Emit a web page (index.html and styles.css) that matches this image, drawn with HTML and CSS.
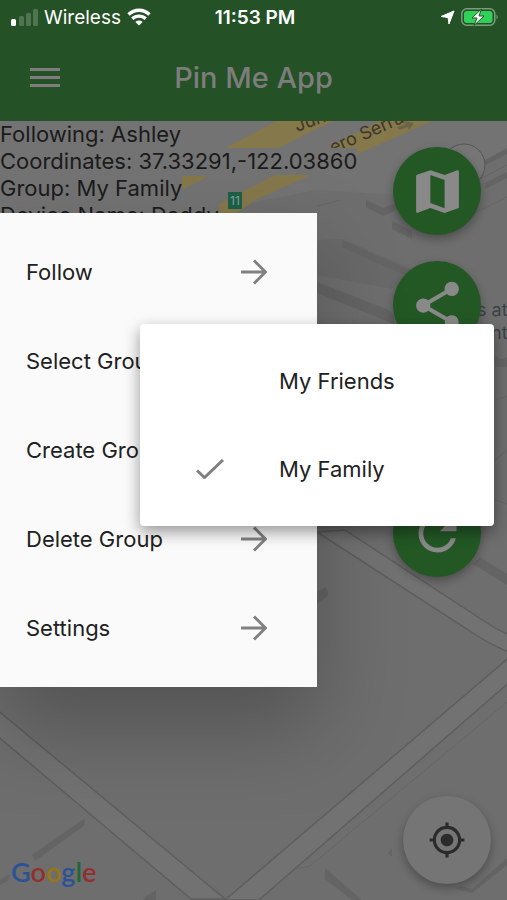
FILE: index.html
```
<!DOCTYPE html>
<html lang="en">
<head>
    <meta charset="UTF-8">
    <meta name="viewport" content="width=device-width, initial-scale=1.0">
    <title>Pin Me App</title>
    <link rel="stylesheet" href="styles.css">
</head>
<body>
    <header class="app-header">
        <div class="status-bar">
            <div class="status-left">
                <svg width="27" height="17" viewBox="0 0 27 17" fill="#fff">
                    <rect x="0" y="10" width="5" height="7" rx="1.5"/>
                    <g opacity=".2">
                        <rect x="8" y="7" width="5" height="10" rx="1.5"/>
                        <rect x="15" y="4" width="5" height="13" rx="1.5"/>
                        <rect x="22" y="0" width="5" height="17" rx="1.5"/>
                    </g>
                </svg>
                <span>Wireless</span>
                <svg width="24" height="18" viewBox="0 0 24 18" fill="none" stroke="#fff" stroke-width="3.4">
                    <path d="M1.5 6.5a15 15 0 0 1 21 0"/>
                    <path d="M5.3 10.8a9.6 9.6 0 0 1 13.4 0"/>
                    <path d="M12 17.5l-3.6-3.6a5.2 5.2 0 0 1 7.2 0z" fill="#fff" stroke="none"/>
                </svg>
            </div>
            <div class="status-time">11:53 PM</div>
            <div class="status-right">
                <svg width="15" height="15" viewBox="0 0 15 15" fill="#fff" stroke="#fff" stroke-linejoin="round">
                    <path d="M14 1L9 14 8 7.500 1 6.500z"/>
                </svg>
                <svg width="38" height="18" viewBox="0 0 38 18">
                    <rect x=".8" y=".8" width="33" height="16.4" rx="5" fill="none" stroke="#7d9c7e" stroke-width="1.5"/>
                    <path d="M35.5 6.5q2.500 2.500 0 5z" fill="#7d9c7e"/>
                    <rect x="3" y="3" width="28.500" height="12" rx="3" fill="#30d158"/>
                    <path d="M20.500 1L11 10h5l-3 7.500L23 8h-5z" fill="#fff" stroke="#245126" stroke-width="1"/>
                </svg>
            </div>
        </div>
        <div class="toolbar">
            <button class="menu-button" aria-label="Menu">
                <svg width="30" height="20" viewBox="0 0 30 20" fill="#7d7d7d">
                    <path d="M0 0h30v3H0zM0 8h30v3H0zM0 16h30v3H0z"/>
                </svg>
            </button>
            <h1 class="app-title">Pin Me App</h1>
        </div>
    </header>

    <main class="map-screen">
        <!-- map background -->
        <svg class="map" viewBox="0 121 507 779" preserveAspectRatio="xMidYMin slice">
            <rect y="121" width="507" height="779" fill="#6e6e6e"/>
            <path d="M0 121h507v30L400 195 317 190 200 213H0z" fill="#737373"/>
            <path d="M227 147L277 121h56L270 152h-50z" fill="#85784b"/>
            <path d="M178 176h30l-28 15z" fill="#85784b"/>
            <path d="M178 225L380 121h52L255 200 220 225z" fill="#85784b"/>
            <path d="M397 127l9-3-3-3 11 2-5 7-1-3-9 3z" fill="#6c6449"/>
            <!-- buildings -->
            <g fill="#646464">
                <path d="M317 240l25-1 70 30-20 20-75-14z" fill="#696969"/>
                <path d="M342 240l85 38v7l-85-38z"/>
                <path d="M366 200l17 8 18-7v7l-18 8-17-9z"/>
                <path d="M392 221l20 10v8l-20-10z"/>
                <path d="M317 282l72 28 5 6v8l-77-31z"/>
                <path d="M485 183l22-11v6l-22 11z"/>
                <path d="M480 163l27-15v6l-27 14z"/>
                <path d="M317 592l8-5 3 4v5l-11 8z"/>
                <path d="M480 557l27 17v11l-34-21z"/>
                <path d="M495 355q5 7 12 2v10h-12z"/>
                <path d="M32 855l53-37v7l-50 36z"/>
                <path d="M0 880l10-6-2 7-8 4z"/>
                <path d="M145 897l11-7v10h-13z"/>
                <path d="M325 868l37 32h-10l-27-21z"/>
                <path d="M388 853l4-5v9z"/>
                <path d="M460 886l12 3 35-31v7l-35 28-16-4z"/>
            </g>
            <g fill="none" stroke="#656565">
                <path d="M317 206l24-6M420 210l87-45M440 230l67-33M495 400l12-4M495 460l12-10M495 500l12 4"/>
            </g>
            <!-- roads -->
            <g stroke="#5e5e5e" stroke-width="1.500" fill="#727272">
                <path d="M317 532L470 631q20 14 44 23v-18q-12-3-30-15L345 530z"/>
                <path d="M-5 708L225 899h-34L-5 734z"/>
                <path d="M512 655L225 900h34L512 680z"/>
            </g>
            <path d="M507 702L310 866l-14 3" fill="none" stroke="#656565"/>
            <g class="map-label">
                <text transform="translate(297 132) rotate(-20)">Jun</text>
                <text transform="translate(333 154) rotate(-24)">ero Serra</text>
            </g>
            <rect x="228" y="192" width="14" height="17" fill="#1d6049"/>
            <text class="map-exit" x="235" y="205" text-anchor="middle">11</text>
            <g class="map-place">
                <text x="477" y="316">s at</text>
                <text x="491" y="339">nt</text>
            </g>
            <circle cx="464" cy="165" r="21" fill="#767676" stroke="#555" stroke-width="1"/>
        </svg>

        <div class="info">
            <div><span>Following: Ashley</span></div>
            <div><span>Coordinates: 37.33291,-122.03860</span></div>
            <div><span>Group: My Family</span></div>
            <div><span>Device Name: Daddy</span></div>
        </div>

        <div class="fab-column">
            <button class="fab" aria-label="Map">
                <svg width="57" height="57" viewBox="0 0 24 24" fill="#898989">
                    <path d="M20.500 3l-.16.030L15 5.100 9 3 3.360 4.900c-.21.070-.36.250-.36.480V20.500c0 .28.220.5.500.5l.16-.03L9 18.900l6 2.100 5.640-1.900c.21-.07.360-.25.360-.48V3.500c0-.28-.22-.5-.5-.5zM15 19l-6-2.110V5l6 2.110V19z"/>
                </svg>
            </button>
            <button class="fab" aria-label="Share">
                <svg width="57" height="57" viewBox="0 0 24 24" fill="#898989">
                    <path d="M18 16.080c-.76 0-1.440.3-1.960.77L8.910 12.700c.05-.23.090-.46.090-.7s-.04-.47-.09-.7l7.050-4.110c.54.500 1.250.81 2.040.81 1.660 0 3-1.340 3-3s-1.340-3-3-3-3 1.340-3 3c0 .24.040.47.090.7L8.040 9.810C7.500 9.310 6.790 9 6 9c-1.660 0-3 1.340-3 3s1.340 3 3 3c.79 0 1.500-.31 2.040-.81l7.120 4.160c-.05.210-.08.430-.08.650 0 1.610 1.310 2.920 2.920 2.920s2.920-1.310 2.920-2.920-1.310-2.920-2.920-2.920z"/>
                </svg>
            </button>
            <button class="fab" aria-label="Add">
                <svg width="57" height="57" viewBox="0 0 24 24" fill="#898989">
                    <path d="M19 13h-6v6h-2v-6H5v-2h6V5h2v6h6z"/>
                </svg>
            </button>
            <button class="fab" aria-label="Refresh">
                <svg width="57" height="57" viewBox="0 0 24 24" fill="#898989">
                    <path d="M17.650 6.350C16.200 4.900 14.210 4 12 4c-4.420 0-7.990 3.580-7.990 8s3.570 8 7.990 8c3.730 0 6.840-2.550 7.730-6h-2.080c-.82 2.330-3.040 4-5.650 4-3.310 0-6-2.690-6-6s2.690-6 6-6c1.660 0 3.140.69 4.220 1.780L13 11h7V4l-2.350 2.350z"/>
                </svg>
            </button>
        </div>

        <button class="locate" aria-label="My location">
            <svg width="38" height="38" viewBox="0 0 24 24" fill="#2b2b2b">
                <path d="M12 8c-2.210 0-4 1.790-4 4s1.790 4 4 4 4-1.790 4-4-1.790-4-4-4zm8.940 3c-.46-4.170-3.770-7.480-7.940-7.940V1h-2v2.060C6.830 3.520 3.520 6.830 3.060 11H1v2h2.060c.46 4.170 3.770 7.480 7.940 7.940V23h2v-2.060c4.170-.46 7.480-3.770 7.940-7.940H23v-2h-2.060zM12 19c-3.870 0-7-3.130-7-7s3.130-7 7-7 7 3.130 7 7-3.130 7-7 7z"/>
            </svg>
        </button>

        <div class="google" aria-label="Google">
            <span class="blue">G</span><span class="red">o</span><span class="yellow">o</span><span class="blue">g</span><span class="green">l</span><span class="red">e</span>
        </div>

        <nav class="drawer">
            <button class="drawer-item">
                <span>Follow</span>
                <svg class="arrow" viewBox="0 0 26 26"><path d="M0 13h24M13 1.500L24.500 13 13 24.500"/></svg>
            </button>
            <button class="drawer-item">
                <span>Select Group</span>
                <svg class="arrow" viewBox="0 0 26 26"><path d="M0 13h24M13 1.500L24.500 13 13 24.500"/></svg>
            </button>
            <button class="drawer-item">
                <span>Create Group</span>
                <svg class="arrow" viewBox="0 0 26 26"><path d="M0 13h24M13 1.500L24.500 13 13 24.500"/></svg>
            </button>
            <button class="drawer-item">
                <span>Delete Group</span>
                <svg class="arrow" viewBox="0 0 26 26"><path d="M0 13h24M13 1.500L24.500 13 13 24.500"/></svg>
            </button>
            <button class="drawer-item">
                <span>Settings</span>
                <svg class="arrow" viewBox="0 0 26 26"><path d="M0 13h24M13 1.500L24.500 13 13 24.500"/></svg>
            </button>
        </nav>

        <div class="popup">
            <button class="popup-item">
                <span class="check"></span>
                <span>My Friends</span>
            </button>
            <button class="popup-item">
                <svg class="check" viewBox="0 0 28 20"><path d="M1 11.500l7.500 7L27 1"/></svg>
                <span>My Family</span>
            </button>
        </div>
    </main>
</body>
</html>
```

FILE: styles.css
```
* {
    box-sizing: border-box;
}
body {
    margin: 0;
    min-height: 100vh;
    display: flex;
    flex-direction: column;
    background-color: #6e6e6e;
    font-family: Inter, "Liberation Sans", sans-serif;
    font-size: 22px;
    color: #212121;
}
button {
    border: 0;
    padding: 0;
    background: none;
    font: inherit;
    color: inherit;
    cursor: pointer;
}
svg {
    display: block;
}

/* header */
.app-header {
    background-color: #245126;
}
.status-bar {
    display: grid;
    grid-template-columns: 1fr auto 1fr;
    align-items: center;
    height: 34px;
    padding: 0 8px 0 11px;
    color: #fff;
    font-size: 19px;
}
.status-left {
    display: flex;
    align-items: center;
    gap: 6px;
}
.status-time {
    font-weight: 600;
}
.status-right {
    display: flex;
    align-items: center;
    justify-content: flex-end;
    gap: 6px;
}
.toolbar {
    display: grid;
    grid-template-columns: 1fr auto 1fr;
    align-items: center;
    height: 87px;
    padding: 0 30px;
}
.menu-button {
    justify-self: start;
}
.app-title {
    margin: 0;
    font-size: 29px;
    font-weight: 500;
    color: #7d7d7d;
}

/* map screen */
.map-screen {
    position: relative;
    flex: 1;
    min-height: 620px;
    overflow: hidden;
}
.map {
    position: absolute;
    width: 100%;
    height: 100%;
}
.map-label {
    font-size: 18px;
    fill: #3d3729;
}
.map-exit {
    font-size: 12px;
    fill: #86a398;
}
.map-place {
    font-size: 18px;
    fill: #3a4245;
}
.info {
    position: relative;
    line-height: 27px;
    color: #1b1b1b;
}
.info span {
    display: inline-block;
    background-color: #737373;
}
.fab-column {
    position: absolute;
    top: 26px;
    right: 26px;
    display: flex;
    flex-direction: column;
    gap: 26px;
}
.fab,
.locate {
    width: 88px;
    height: 88px;
    border-radius: 50%;
    display: flex;
    align-items: center;
    justify-content: center;
    box-shadow: 0 4px 10px rgba(0, 0, 0, 0.3);
}
.fab {
    background-color: #235825;
}
.locate {
    position: absolute;
    right: 16px;
    bottom: 16px;
    background-color: #757575;
}
.google {
    position: absolute;
    left: 11px;
    bottom: 11px;
    font-family: Lato, Inter, sans-serif;
    font-size: 27px;
    line-height: 34px;
    font-weight: 600;
}
.blue {
    color: #2b5298;
}
.red {
    color: #932f2b;
}
.yellow {
    color: #9a7610;
}
.green {
    color: #1f6837;
}

/* menus */
.drawer {
    position: absolute;
    top: 92px;
    left: 0;
    width: 317px;
    padding: 15px 0;
    display: flex;
    flex-direction: column;
    gap: 1px;
    background-color: #fafafa;
    box-shadow: 0 40px 80px rgba(0, 0, 0, 0.25);
}
.drawer-item {
    display: flex;
    align-items: center;
    justify-content: space-between;
    height: 88px;
    padding: 0 50px 0 26px;
}
.arrow {
    width: 26px;
    height: 26px;
    fill: none;
    stroke: #808080;
    stroke-width: 3;
}
.popup {
    position: absolute;
    top: 203px;
    right: 13px;
    width: 354px;
    padding: 13px 0;
    border-radius: 4px;
    background-color: #fff;
    box-shadow: 0 6px 16px rgba(0, 0, 0, 0.4);
}
.popup-item {
    display: flex;
    align-items: center;
    gap: 55px;
    width: 100%;
    height: 88px;
    padding: 0 56px;
}
.check {
    width: 28px;
    height: 20px;
    fill: none;
    stroke: #808080;
    stroke-width: 3;
}
```
